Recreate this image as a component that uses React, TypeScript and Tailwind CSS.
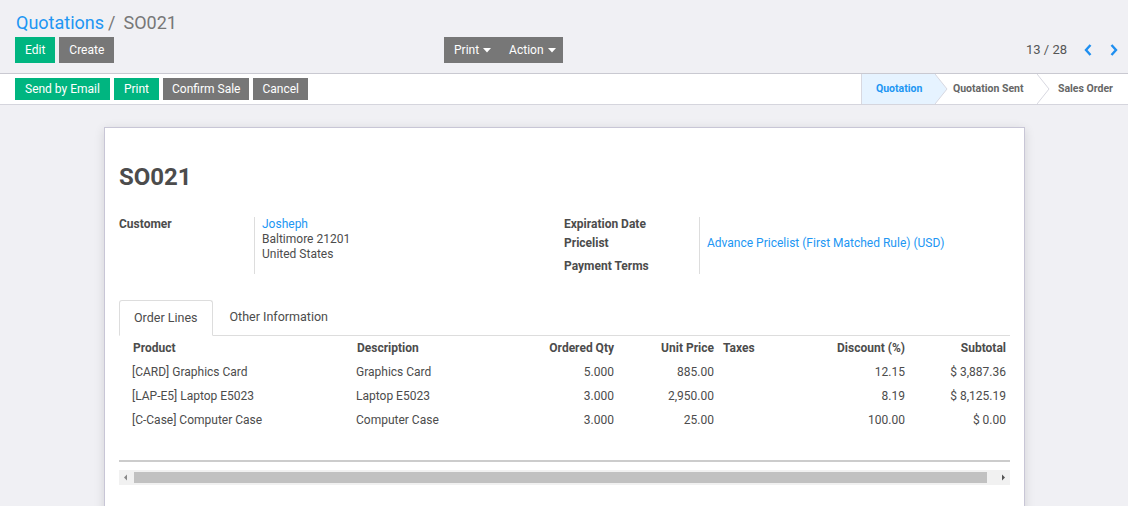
import React from "react";

const Caret = () => (
  <svg width="8" height="5" viewBox="0 0 8 5" className="ml-[4px] inline-block">
    <path d="M0 0 L8 0 L4 4.5 Z" fill="#fff" />
  </svg>
);

const StepArrow = ({ fill }: { fill: string }) => (
  <svg width="13" height="30" viewBox="0 0 13 30" className="absolute right-[-12px] top-0 z-10">
    <path d="M0 0 L12 15 L0 30" fill={fill} stroke="#d8d8e0" strokeWidth="1" />
  </svg>
);

const rows = [
  ["[CARD] Graphics Card", "Graphics Card", "5.000", "885.00", "", "12.15", "$ 3,887.36"],
  ["[LAP-E5] Laptop E5023", "Laptop E5023", "3.000", "2,950.00", "", "8.19", "$ 8,125.19"],
  ["[C-Case] Computer Case", "Computer Case", "3.000", "25.00", "", "100.00", "$ 0.00"],
];

const cols = "grid grid-cols-[10px_224px_187px_78px_100px_82px_109px_101px]";

export default function App() {
  return (
    <div className="w-[1128px] h-[506px] overflow-hidden bg-[#f0f0f4] text-[#4c4c4c] font-['Roboto',sans-serif] text-[12px]">
      {/* control panel */}
      <div className="h-[74px] border-b border-[#c9c9d1] pl-[15px] pr-[10px]">
        <div className="pt-[9px] h-[37px] text-[18px] leading-[24px] flex items-center">
          <span className="text-[#2196f3] ml-[1px]">Quotations</span>
          <span className="text-[#777] ml-[4px]">/</span>
          <span className="text-[#777] ml-[8px]">SO021</span>
        </div>
        <div className="flex items-center h-[26px]">
          <div className="flex gap-[4px] w-[429px]">
            <button className="h-[26px] px-[10px] bg-[#00b580] text-white text-[12px]">Edit</button>
            <button className="h-[26px] px-[10px] bg-[#777] text-white text-[12px]">Create</button>
          </div>
          <div className="flex bg-[#777] h-[26px] items-center text-white text-[12px] w-[119px]">
            <span className="pl-[10px] flex items-center">Print<Caret /></span>
            <span className="pl-[18px] flex items-center">Action<Caret /></span>
          </div>
          <div className="ml-auto flex items-center text-[13px] text-[#555]">
            <span>13 / 28</span>
            <svg width="9" height="12" viewBox="0 0 9 12" className="ml-[17px]">
              <path d="M6.5 1 L2 6 L6.5 11" stroke="#1f8ff0" strokeWidth="2.4" fill="none" />
            </svg>
            <svg width="9" height="12" viewBox="0 0 9 12" className="ml-[16px]">
              <path d="M2.5 1 L7 6 L2.5 11" stroke="#1f8ff0" strokeWidth="2.4" fill="none" />
            </svg>
          </div>
        </div>
      </div>
      {/* status bar */}
      <div className="h-[31px] bg-white border-b border-[#d5d5dd] flex items-center pl-[15px]">
        <div className="flex gap-[4px]">
          <button className="h-[22px] px-[10px] bg-[#00b580] text-white text-[12px]">Send by Email</button>
          <button className="h-[22px] px-[10px] bg-[#00b580] text-white text-[12px]">Print</button>
          <button className="h-[22px] px-[9px] bg-[#777] text-white text-[12px]">Confirm Sale</button>
          <button className="h-[22px] px-[9px] bg-[#777] text-white text-[12px]">Cancel</button>
        </div>
        <div className="ml-auto flex h-[30px] self-start text-[10.5px] font-bold">
          <div className="relative w-[75px] bg-[#e6f3ff] border-l border-[#d8d8e0] text-[#2196f3] flex items-center pl-[14px]">
            Quotation
            <StepArrow fill="#e6f3ff" />
          </div>
          <div className="relative w-[102px] text-[#666] flex items-center pl-[17px]">
            Quotation Sent
            <StepArrow fill="#fff" />
          </div>
          <div className="w-[90px] text-[#666] flex items-center pl-[20px]">Sales Order</div>
        </div>
      </div>
      {/* sheet area */}
      <div className="pt-[22px] pl-[104px]">
        <div className="w-[921px] h-[400px] bg-white border border-[#c8c6d6] shadow-[0_2px_10px_rgba(0,0,0,0.12)] pl-[14px] pr-[14px]">
          <div className="pt-[32px] h-[89px] text-[24px] font-bold text-[#4c4c4c] leading-[34px]">SO021</div>
          <div className="grid grid-cols-[445px_446px]">
            <div className="flex">
              <div className="w-[135px] font-bold leading-[15px]">Customer</div>
              <div className="border-l border-[#ddd] pl-[7px] leading-[15px] h-[57px]">
                <div className="text-[#2196f3]">Josheph</div>
                <div>Baltimore 21201</div>
                <div>United States</div>
              </div>
            </div>
            <div className="flex">
              <div className="w-[135px] font-bold">
                <div className="h-[18px] leading-[15px]">Expiration Date</div>
                <div className="h-[18px] leading-[18px] -mt-[1px]">Pricelist</div>
                <div className="pt-[5px] leading-[18px]">Payment Terms</div>
              </div>
              <div className="border-l border-[#ddd] pl-[7px] h-[57px]">
                <div className="h-[17px]" />
                <div className="leading-[18px] text-[#2196f3]">Advance Pricelist (First Matched Rule) (USD)</div>
              </div>
            </div>
          </div>
          {/* tabs */}
          <div className="mt-[25px] flex h-[36px] border-b border-[#ddd] text-[12.5px]">
            <div className="h-[36px] px-[14px] border border-[#ddd] border-b-white bg-white rounded-t-[3px] flex items-center">Order Lines</div>
            <div className="h-[35px] px-[17px] flex items-center">Other Information</div>
          </div>
          {/* table */}
          <div className={`${cols} h-[24px] items-center font-bold`}>
            <div />
            <div className="pl-[4px]">Product</div>
            <div className="pl-[4px]">Description</div>
            <div className="text-right pr-[4px]">Ordered Qty</div>
            <div className="text-right pr-[4px]">Unit Price</div>
            <div className="pl-[5px]">Taxes</div>
            <div className="text-right pr-[4px]">Discount (%)</div>
            <div className="text-right pr-[4px]">Subtotal</div>
          </div>
          {rows.map((r, i) => (
            <div key={i} className={`${cols} h-[24px] items-center`}>
              <div />
              <div className="pl-[3px]">{r[0]}</div>
              <div className="pl-[3px]">{r[1]}</div>
              <div className="text-right pr-[4px]">{r[2]}</div>
              <div className="text-right pr-[4px]">{r[3]}</div>
              <div className="pl-[5px]">{r[4]}</div>
              <div className="text-right pr-[4px]">{r[5]}</div>
              <div className="text-right pr-[4px]">{r[6]}</div>
            </div>
          ))}
          <div className="mt-[28px] border-t-2 border-[#ccc]" />
          <div className="mt-[8px] h-[15px] bg-[#f1f1f1] flex items-center">
            <svg width="15" height="15" viewBox="0 0 15 15">
              <path d="M5 7.5 L8 4.5 L8 10.5 Z" fill="#888" />
            </svg>
            <div className="h-[11px] w-[853px] bg-[#c1c1c1]" />
            <div className="flex-1" />
            <svg width="15" height="15" viewBox="0 0 15 15">
              <path d="M10 7.5 L7 4.5 L7 10.5 Z" fill="#555" />
            </svg>
          </div>
        </div>
      </div>
    </div>
  );
}
